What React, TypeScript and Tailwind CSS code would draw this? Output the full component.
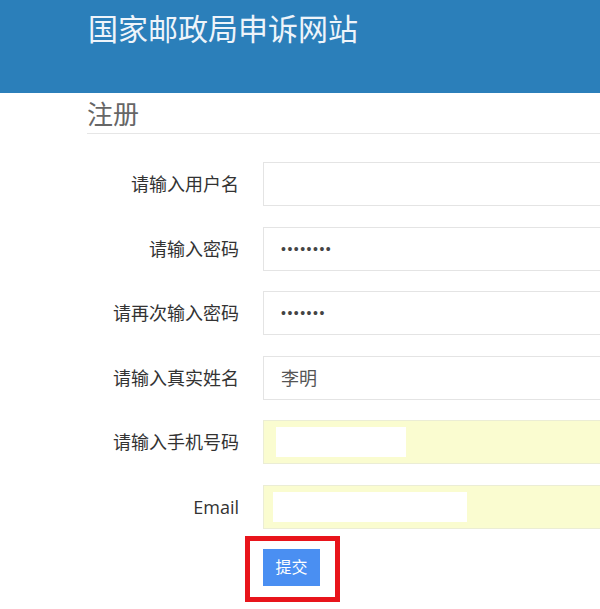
import React from "react";

const font = {
  fontFamily: '"Open Sans", "Noto Sans CJK SC", sans-serif',
};

function FieldRow({
  label,
  value,
  kind = "text",
  autofill = false,
  fillWidth = 0,
  fillOffset = -5,
}: {
  label: string;
  value?: string;
  kind?: "text" | "dots";
  autofill?: boolean;
  fillWidth?: number;
  fillOffset?: number;
}) {
  return (
    <div className="flex items-center">
      <label className="w-[240px] shrink-0 pr-[1px] text-right text-[18px] leading-[24px] text-[#333]">
        {label}
      </label>
      <div
        className={`relative ml-[23px] flex h-[44px] w-[420px] shrink-0 items-center border pl-[17px] ${
          autofill ?
            "border-[#ebedd5] bg-[#fafcd0]"
          : "border-[#e4e4e4] bg-white"
        }`}
      >
        {autofill ?
          <div
            className="h-[30px] bg-white"
            style={{ width: fillWidth, marginLeft: fillOffset }}
          />
        : kind === "dots" ?
          <span
            className="text-[14px] leading-none tracking-[1.5px] text-[#444]"
            style={{ fontFamily: '"Liberation Sans", sans-serif' }}
          >
            {value}
          </span>
        : <span className="text-[18px] leading-[24px] text-[#555]">
            {value}
          </span>
        }
      </div>
    </div>
  );
}

export default function App() {
  return (
    <div className="h-[609px] w-[600px] overflow-hidden bg-white" style={font}>
      <header className="h-[93px] bg-[#2b7fba] pl-[88px] pt-[13px]">
        <h1 className="text-[30px] leading-[32px] font-normal text-[#eef4fa]">
          国家邮政局申诉网站
        </h1>
      </header>

      <div className="pl-[87px]">
        <h2 className="mt-[6px] border-b border-[#e6e6e6] pb-[4px] text-[26px] leading-[30px] font-normal text-[#666]">
          注册
        </h2>
      </div>

      <form className="mt-[28px] flex flex-col gap-[20.6px]">
        <FieldRow label="请输入用户名" value="" />
        <FieldRow label="请输入密码" kind="dots" value="••••••••" />
        <FieldRow label="请再次输入密码" kind="dots" value="•••••••" />
        <FieldRow label="请输入真实姓名" value="李明" />
        <FieldRow label="请输入手机号码" autofill fillWidth={130} />
        <FieldRow label="Email" autofill fillWidth={194} fillOffset={-8} />
      </form>

      <div className="relative ml-[263px] mt-[20px] w-[57px]">
        <button
          type="button"
          className="h-[37px] w-[57px] bg-[#4a8ff2] text-[16px] text-white"
        >
          提交
        </button>
        <div className="absolute left-[-18px] top-[-13px] h-[66px] w-[95px] border-[5px] border-[#e8141b]" />
      </div>
    </div>
  );
}
